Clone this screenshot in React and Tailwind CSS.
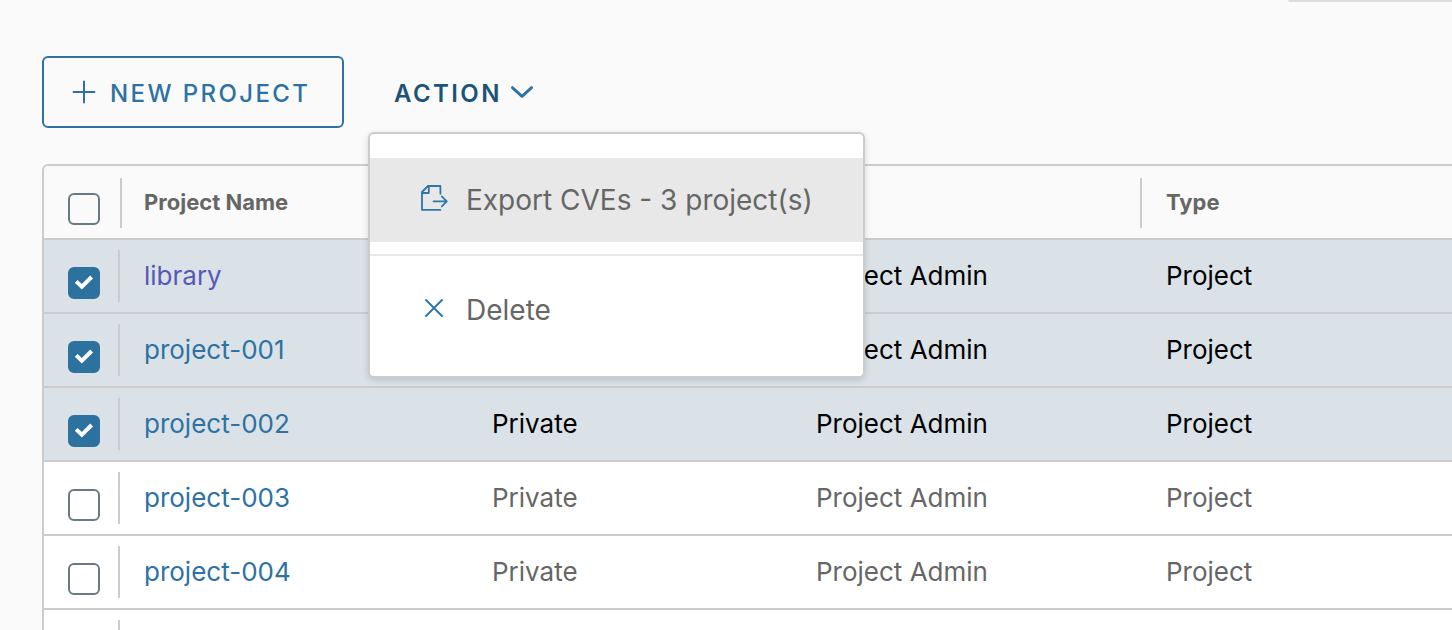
import { useState } from "react";

const initialProjects = [
  { name: "library", access: "Public", role: "Project Admin", type: "Project", selected: true, visited: true },
  { name: "project-001", access: "Private", role: "Project Admin", type: "Project", selected: true },
  { name: "project-002", access: "Private", role: "Project Admin", type: "Project", selected: true },
  { name: "project-003", access: "Private", role: "Project Admin", type: "Project", selected: false },
  { name: "project-004", access: "Private", role: "Project Admin", type: "Project", selected: false },
  { name: "project-005", access: "Private", role: "Project Admin", type: "Project", selected: false },
];

function PlusIcon() {
  return (
    <svg className="size-6" viewBox="0 0 24 24" fill="none" stroke="currentColor" strokeWidth="2" strokeLinecap="round" aria-hidden="true">
      <path d="M12 1.6V22.4M1.6 12H22.4" />
    </svg>
  );
}

function CaretIcon() {
  return (
    <svg className="h-3 w-6" viewBox="0 0 24 12" fill="none" stroke="#2d72a3" strokeWidth="2.8" strokeLinecap="round" strokeLinejoin="round" aria-hidden="true">
      <path d="M2.4 1.6L12 10.4L21.6 1.6" />
    </svg>
  );
}

function ExportIcon() {
  return (
    <svg className="mb-1 h-7 w-7" viewBox="0 0 28 28" fill="none" stroke="#2d78aa" strokeWidth="1.8" strokeLinecap="round" strokeLinejoin="round" aria-hidden="true">
      <path d="M20.4 9.8V2H8L2 8V25.8H20.4" />
      <path d="M8.8 2.4V9H2.4" />
      <path d="M13.5 17.4H26.6M21.8 12.4L26.8 17.4L21.8 22.4" />
    </svg>
  );
}

function CloseIcon() {
  return (
    <svg className="mb-1 h-7 w-7" viewBox="0 0 28 28" fill="none" stroke="#2d78aa" strokeWidth="2" strokeLinecap="round" aria-hidden="true">
      <path d="M6 6L22 22M22 6L6 22" />
    </svg>
  );
}

function Checkbox({ label, checked, onChange }) {
  return (
    <label className="mt-[27px] ml-6 grid size-8 place-items-center">
      <input
        type="checkbox"
        aria-label={label}
        checked={checked}
        onChange={onChange}
        className="peer col-start-1 row-start-1 size-8 appearance-none rounded-md border-2 border-[#6a7a81] checked:border-[#2d719f] checked:bg-[#2d719f]"
      />
      <svg className="pointer-events-none invisible col-start-1 row-start-1 size-8 peer-checked:visible" viewBox="0 0 32 32" fill="none" stroke="#fff" strokeWidth="4" aria-hidden="true">
        <path d="M8.2 14.4L13.8 19.8L23.6 10" />
      </svg>
    </label>
  );
}

function HeaderCell({ children, label }) {
  return (
    <th scope="col" aria-label={label} className="h-[74px] border-b-2 border-[#ccc] p-0 text-left align-top text-[22px] leading-[72px] font-bold text-[#666]">
      {children}
    </th>
  );
}

export default function App() {
  const [projects, setProjects] = useState(initialProjects);
  const [all, setAll] = useState(false);
  const count = projects.filter((p) => p.selected).length;

  const toggle = (name) =>
    setProjects(projects.map((p) => (p.name === name ? { ...p, selected: !p.selected } : p)));
  const toggleAll = () => {
    setProjects(projects.map((p) => ({ ...p, selected: !all })));
    setAll(!all);
  };

  return (
    <main className="h-screen overflow-hidden bg-[#fafafa] pl-[42px] font-['Inter','Noto_Sans',sans-serif]">
      <div className="flex h-14 items-start justify-end">
        <div className="h-[2px] w-[164px] rounded-bl-sm bg-[#ddd]" />
      </div>

      <div className="flex gap-6">
        <button type="button" className="flex h-[72px] min-w-[302px] items-center gap-[14px] rounded-md border-2 border-[#2d72a3] px-7 text-2xl font-medium tracking-widest whitespace-nowrap text-[#2d72a3]">
          <PlusIcon />
          <span className="pt-1">NEW PROJECT</span>
        </button>

        <div className="relative">
          <button type="button" aria-haspopup="menu" aria-expanded="true" className="flex h-[72px] items-center gap-2 px-[26px] text-2xl font-semibold tracking-widest text-[#1c5479]">
            <span className="pt-1">ACTION</span>
            <CaretIcon />
          </button>
          <div role="menu" className="absolute top-[76px] left-0 z-10 w-[497px] rounded-md border-2 border-[#ccc] bg-white py-6 text-[28px] text-[#666] shadow-[0_2px_6px_rgba(0,0,0,0.15)]">
            <button type="button" role="menuitem" className="flex h-[84px] w-full items-center gap-[18px] bg-[#e8e8e8] pl-[50px] whitespace-nowrap">
              <ExportIcon />
              {`Export CVEs - ${count} project(s)`}
            </button>
            <hr className="my-3 border-t-2 border-[#e8e8e8]" />
            <button type="button" role="menuitem" className="flex h-[84px] w-full items-center gap-[18px] pl-[50px]">
              <CloseIcon />
              Delete
            </button>
          </div>
        </div>
      </div>

      <div className="mt-9 rounded-tl-md border-t-2 border-l-2 border-[#ccc]">
        <table className="w-full table-fixed border-separate border-spacing-0 text-[26px]">
          <colgroup>
            <col className="w-[76px]" />
            <col className="w-[348px]" />
            <col className="w-[324px]" />
            <col className="w-[350px]" />
            <col />
          </colgroup>
          <thead>
            <tr>
              <HeaderCell>
                <Checkbox label="Select all projects" checked={all} onChange={toggleAll} />
              </HeaderCell>
              <HeaderCell>
                <div className="flex items-start">
                  <span className="mt-3 h-[50px] w-[2px] bg-[#ccc]" />
                  <span className="pl-[22px]">Project Name</span>
                </div>
              </HeaderCell>
              <HeaderCell label="Access Level" />
              <HeaderCell label="Role">
                <div className="flex items-start justify-end">
                  <span className="mt-3 h-[50px] w-[2px] bg-[#ccc]" />
                </div>
              </HeaderCell>
              <HeaderCell>
                <div className="pl-6">Type</div>
              </HeaderCell>
            </tr>
          </thead>
          <tbody>
            {projects.map((p) => (
              <tr
                key={p.name}
                className={
                  p.selected
                    ? "bg-[#dae2e8] text-black [&>td]:h-[74px] [&>td]:border-b-2 [&>td]:border-[#ccc]"
                    : "bg-white text-[#666] [&>td]:h-[74px] [&>td]:border-b-2 [&>td]:border-[#ccc]"
                }
              >
                <td className="p-0 align-top">
                  <div className="flex items-start justify-between">
                    <Checkbox label={`Select ${p.name}`} checked={p.selected} onChange={() => toggle(p.name)} />
                    <span className="mt-[10px] h-[52px] w-[2px] bg-[#ccc]" />
                  </div>
                </td>
                <td className="pt-0 pb-[2px] pl-6">
                  <a href="#" className={p.visited ? "text-[#5659b8]" : "text-[#2d72a3]"}>
                    {p.name}
                  </a>
                </td>
                <td className="pt-0 pb-[2px] pl-6">{p.access}</td>
                <td className="pt-0 pb-[2px] pl-6">{p.role}</td>
                <td className="pt-0 pb-[2px] pl-6">{p.type}</td>
              </tr>
            ))}
          </tbody>
        </table>
      </div>
    </main>
  );
}
